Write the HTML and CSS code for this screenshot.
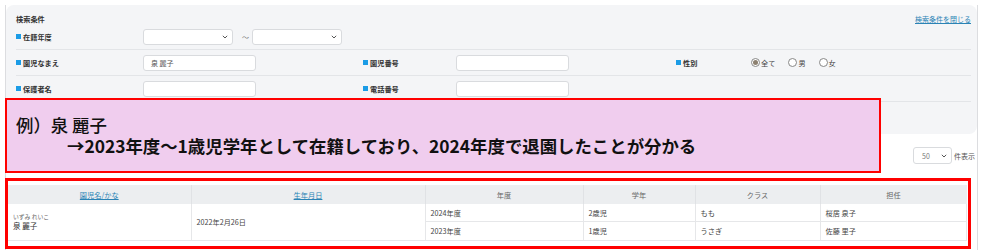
FILE: index.html
```html
<!DOCTYPE html>
<html lang="ja">
<head>
    <meta charset="UTF-8">
    <title>園児検索</title>
    <link rel="stylesheet" href="styles.css">
</head>
<body>

    <div class="page">
        <section class="search">
            <div class="search-head">
                <span class="search-title">検索条件</span>
                <a class="close-link" href="#">検索条件を閉じる</a>
            </div>

            <div class="search-row">
                <div class="label">在籍年度</div>
                <div class="field field-wide">
                    <div class="select select-year"><span></span><svg width="6" height="4" viewBox="0 0 6 4"><path d="M0.8 0.8 L3 3 L5.2 0.8" fill="none" stroke="#555" stroke-width="1"/></svg></div>
                    <span class="range-sep">～</span>
                    <div class="select select-year"><span></span><svg width="6" height="4" viewBox="0 0 6 4"><path d="M0.8 0.8 L3 3 L5.2 0.8" fill="none" stroke="#555" stroke-width="1"/></svg></div>
                </div>
            </div>

            <div class="search-row">
                <div class="label">園児なまえ</div>
                <div class="field"><div class="input">泉 麗子</div></div>
                <div class="label">園児番号</div>
                <div class="field"><div class="input"></div></div>
                <div class="label">性別</div>
                <div class="field radios">
                    <span class="radio checked"></span><span class="radio-text">全て</span>
                    <span class="radio"></span><span class="radio-text">男</span>
                    <span class="radio"></span><span class="radio-text">女</span>
                </div>
            </div>

            <div class="search-row">
                <div class="label">保護者名</div>
                <div class="field"><div class="input"></div></div>
                <div class="label">電話番号</div>
                <div class="field"><div class="input"></div></div>
            </div>

            <div class="search-row last"></div>
        </section>

        <div class="list-tools">
            <div class="select select-count"><span>50</span><svg width="6" height="4" viewBox="0 0 6 4"><path d="M0.8 0.8 L3 3 L5.2 0.8" fill="none" stroke="#555" stroke-width="1"/></svg></div>
            <span class="count-text">件表示</span>
        </div>

        <div class="result-box">
            <table class="result">
                <colgroup>
                    <col style="width: 183px">
                    <col style="width: 234px">
                    <col style="width: 158px">
                    <col style="width: 112px">
                    <col style="width: 125px">
                    <col>
                </colgroup>
                <thead>
                    <tr>
                        <th><a href="#">園児名/かな</a></th>
                        <th><a href="#">生年月日</a></th>
                        <th>年度</th>
                        <th>学年</th>
                        <th>クラス</th>
                        <th>担任</th>
                    </tr>
                </thead>
                <tbody>
                    <tr>
                        <td rowspan="2" class="name-cell">
                            <div class="kana">いずみ れいこ</div>
                            <div class="name">泉 麗子</div>
                        </td>
                        <td rowspan="2">2022年2月26日</td>
                        <td>2024年度</td>
                        <td>2歳児</td>
                        <td>もも</td>
                        <td>桜居 泉子</td>
                    </tr>
                    <tr>
                        <td>2023年度</td>
                        <td>1歳児</td>
                        <td>うさぎ</td>
                        <td>佐藤 里子</td>
                    </tr>
                </tbody>
            </table>
        </div>
    </div>

    <!-- 説明用の注記 -->
    <div class="note">
        <p class="note-title">例）泉 麗子</p>
        <p class="note-text">→2023年度～1歳児学年として在籍しており、2024年度で退園したことが分かる</p>
    </div>

</body>
</html>
```

FILE: styles.css
```css
body {
    margin: 0;
    background-color: #fff;
    font-family: "Noto Sans CJK JP", "Noto Sans", sans-serif;
    color: #333;
    position: relative;
}

.page {
    margin: 0 4px 0 5px;
    height: 250px;
    border-left: 1px solid #dcdde0;
    border-right: 1px solid #dcdde0;
}

.search {
    margin-top: 5px;
    padding: 9px 6px 7px 10px;
    background-color: #f4f5f7;
    border-radius: 8px;
}

.search-head {
    display: flex;
    justify-content: space-between;
    align-items: center;
    height: 10px;
}

.search-title {
    font-size: 7.2px;
    font-weight: bold;
    line-height: 10px;
}

.close-link {
    font-size: 7px;
    line-height: 10px;
    color: #2a83b5;
}

.search-row {
    display: grid;
    grid-template-columns: 127px 220px 93px 220px 75px 1fr;
    align-items: center;
    height: 25px;
    border-bottom: 1px solid #e3e5e8;
}

.search-row.last {
    border-bottom: none;
}

.label {
    display: flex;
    align-items: center;
    font-size: 7.2px;
    font-weight: bold;
    line-height: 10px;
}

.label::before {
    content: "";
    width: 5px;
    height: 5px;
    margin-right: 2px;
    background-color: #1b9ce6;
}

.field {
    display: flex;
    align-items: center;
}

.field-wide {
    grid-column: 2 / 7;
}

.input,
.select {
    box-sizing: border-box;
    height: 16px;
    background-color: #fff;
    border: 1px solid #d9dbde;
    border-radius: 3px;
    font-size: 7px;
    line-height: 14px;
    color: #555;
}

.input {
    width: 113px;
    padding-left: 7px;
}

.select {
    display: flex;
    align-items: center;
    justify-content: space-between;
    padding: 0 4px 0 9px;
}

.select-year {
    width: 90px;
}

.range-sep {
    margin: 0 3px 0 9px;
    font-size: 7px;
    color: #777;
}

.radios {
    font-size: 7.2px;
    color: #444;
}

.radio {
    box-sizing: border-box;
    width: 9px;
    height: 9px;
    border: 1px solid #888;
    border-radius: 50%;
    background-color: #fff;
    display: flex;
    align-items: center;
    justify-content: center;
}

.radio.checked::after {
    content: "";
    width: 5px;
    height: 5px;
    border-radius: 50%;
    background-color: #8c8070;
}

.radio-text {
    margin: 0 20px 0 1px;
    line-height: 10px;
}

.radio-text:nth-of-type(2n) {
    margin-right: 13px;
}

.list-tools {
    display: flex;
    justify-content: flex-end;
    align-items: center;
    margin-top: 13px;
    padding-right: 2px;
}

.select-count {
    width: 39px;
    height: 17px;
    padding-left: 8px;
    color: #777;
}

.count-text {
    margin-left: 2px;
    font-size: 7px;
    color: #555;
}

.result-box {
    margin: 14px 6px 0 -1px;
    padding: 4px 1px 5px 0;
    border: 3px solid #ff0000;
}

.result {
    width: 959px;
    border-collapse: collapse;
    table-layout: fixed;
    font-size: 7.2px;
    color: #444;
}

.result th {
    height: 19px;
    padding: 0;
    background-color: #eceef0;
    border-left: 1px solid #e0e2e5;
    font-weight: normal;
    color: #666;
    text-align: center;
}

.result th:first-child {
    border-left: none;
}

.result th a {
    color: #2a83b5;
}

.result td {
    height: 17px;
    padding: 0 0 0 5px;
    border: 1px solid #e6e7e9;
    border-top: none;
    line-height: 10px;
}

.result td:first-child {
    border-left: none;
}

.result tr:last-child td {
    height: 18px;
}

.name-cell .kana {
    font-size: 5.8px;
    color: #666;
    line-height: 8px;
}

.name-cell .name {
    font-size: 7.5px;
    color: #333;
}

.note {
    position: absolute;
    left: 5px;
    top: 98px;
    box-sizing: border-box;
    width: 876px;
    height: 75px;
    padding: 14px 0 0 9px;
    background-color: #f0cdee;
    border: 2px solid #ff0000;
    color: #111;
}

.note p {
    margin: 0;
    font-size: 17.4px;
    line-height: 21px;
}

.note-title {
    font-weight: 500;
}

.note-text {
    padding-left: 51px;
    font-weight: bold;
}
```
